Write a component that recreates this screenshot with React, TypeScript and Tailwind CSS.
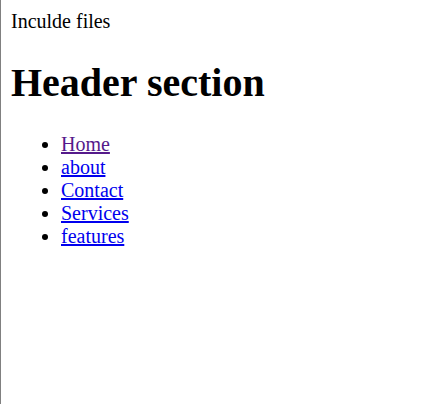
const links = [
  { label: 'Home', visited: true },
  { label: 'about' },
  { label: 'Contact' },
  { label: 'Services' },
  { label: 'features' },
]

export default function App() {
  return (
    <div className="min-h-screen border-l border-[#808080] bg-white p-[10px] font-['Liberation_Serif','Times_New_Roman',serif] text-[20px] leading-[23px] text-black">
      <div>Inculde files</div>

      <h1 className="my-[26.8px] text-[40px] font-bold leading-[46px]">Header section</h1>

      <ul className="mt-0 list-disc pl-[50px]">
        {links.map((link) => (
          <li key={link.label}>
            <a
              href="#"
              className={
                link.visited
                  ? 'text-[#551a8b] underline decoration-2'
                  : 'text-[#0000ee] underline decoration-2'
              }
            >
              {link.label}
            </a>
          </li>
        ))}
      </ul>
    </div>
  )
}
